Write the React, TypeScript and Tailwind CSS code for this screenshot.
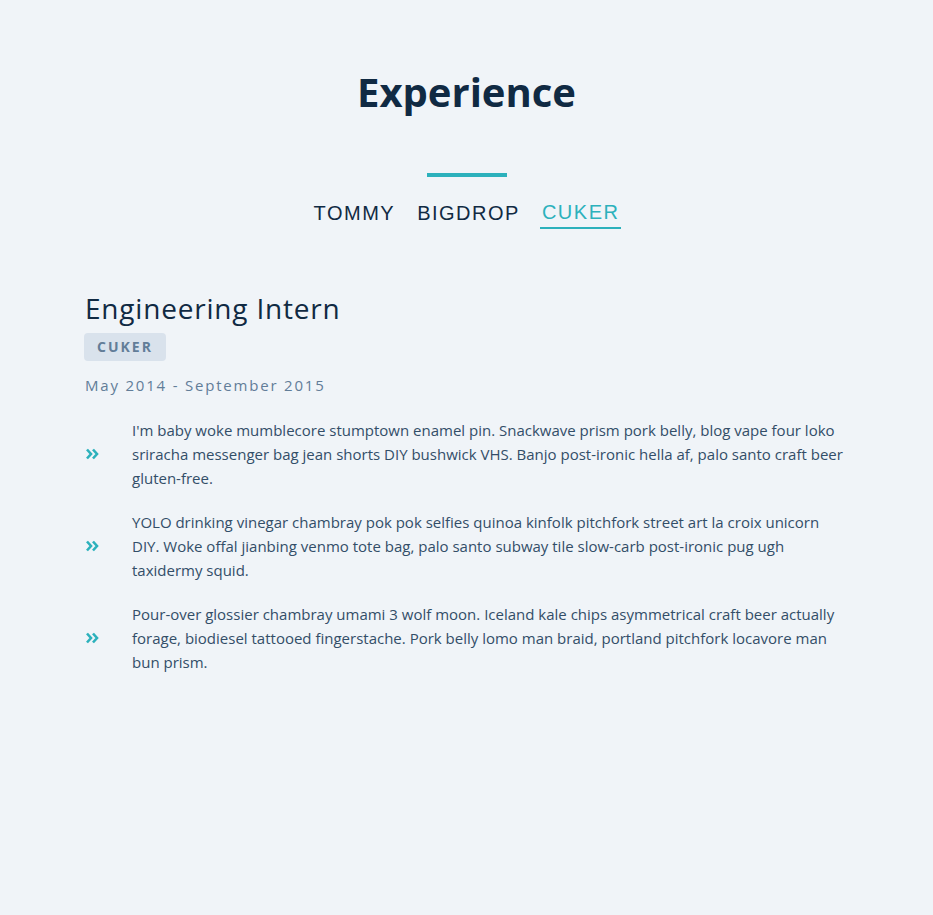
import React from "react";

const bullets = [
  "I'm baby woke mumblecore stumptown enamel pin. Snackwave prism pork belly, blog vape four loko sriracha messenger bag jean shorts DIY bushwick VHS. Banjo post-ironic hella af, palo santo craft beer gluten-free.",
  "YOLO drinking vinegar chambray pok pok selfies quinoa kinfolk pitchfork street art la croix unicorn DIY. Woke offal jianbing venmo tote bag, palo santo subway tile slow-carb post-ironic pug ugh taxidermy squid.",
  "Pour-over glossier chambray umami 3 wolf moon. Iceland kale chips asymmetrical craft beer actually forage, biodiesel tattooed fingerstache. Pork belly lomo man braid, portland pitchfork locavore man bun prism.",
];

function Chevrons() {
  return (
    <svg width="13" height="12" viewBox="0 0 13 12" className="shrink-0">
      <path d="M1 1.5 L5 6 L1 10.5" fill="none" stroke="#2cb1bc" strokeWidth="2.6" strokeLinejoin="miter" />
      <path d="M7 1.5 L11 6 L7 10.5" fill="none" stroke="#2cb1bc" strokeWidth="2.6" strokeLinejoin="miter" />
    </svg>
  );
}

export default function App() {
  return (
    <div
      className="min-h-[915px] w-full bg-[#f0f4f8]"
      style={{ fontFamily: '"Open Sans", "Noto Sans", sans-serif' }}
    >
      <div className="flex flex-col items-center pt-[66px]">
        <h2 className="text-[40px] font-bold leading-[52px] tracking-[0px] text-[#102a43]">Experience</h2>
        <div className="mt-[55px] h-[4px] w-[80px] bg-[#2cb1bc]" />
        <div
          className="mt-[21px] flex gap-[18px] text-[20px] leading-[28px] tracking-[1.5px]"
          style={{ fontFamily: '"Liberation Sans", Arial, sans-serif' }}
        >
          <button className="px-[2px] pb-[1px] text-[#102a43]">TOMMY</button>
          <button className="px-[2px] pb-[1px] text-[#102a43]">BIGDROP</button>
          <button className="border-b-2 border-[#2cb1bc] px-[2px] pb-[1px] text-[#2cb1bc]">CUKER</button>
        </div>
      </div>
      <div className="mx-[85px] mt-[61px]">
        <h3 className="text-[28px] leading-[36px] tracking-[0.8px] text-[#102a43]">Engineering Intern</h3>
        <span className="mt-[7px] -ml-[1px] inline-block rounded-[4px] bg-[#d9e2ec] px-[13px] py-[3px] text-[14px] font-bold leading-[22px] tracking-[2px] text-[#627d98]">
          CUKER
        </span>
        <p className="mt-[12px] text-[15px] leading-[24px] tracking-[1.8px] text-[#627d98]">May 2014 - September 2015</p>
        <div className="mt-[21px] flex flex-col gap-[20px]">
          {bullets.map((b, i) => (
            <div key={i} className="flex items-center">
              <div className="w-[47px] shrink-0 pl-[1px]">
                <Chevrons />
              </div>
              <p className="text-[15px] leading-[24px] text-[#334e68]">{b}</p>
            </div>
          ))}
        </div>
      </div>
    </div>
  );
}
